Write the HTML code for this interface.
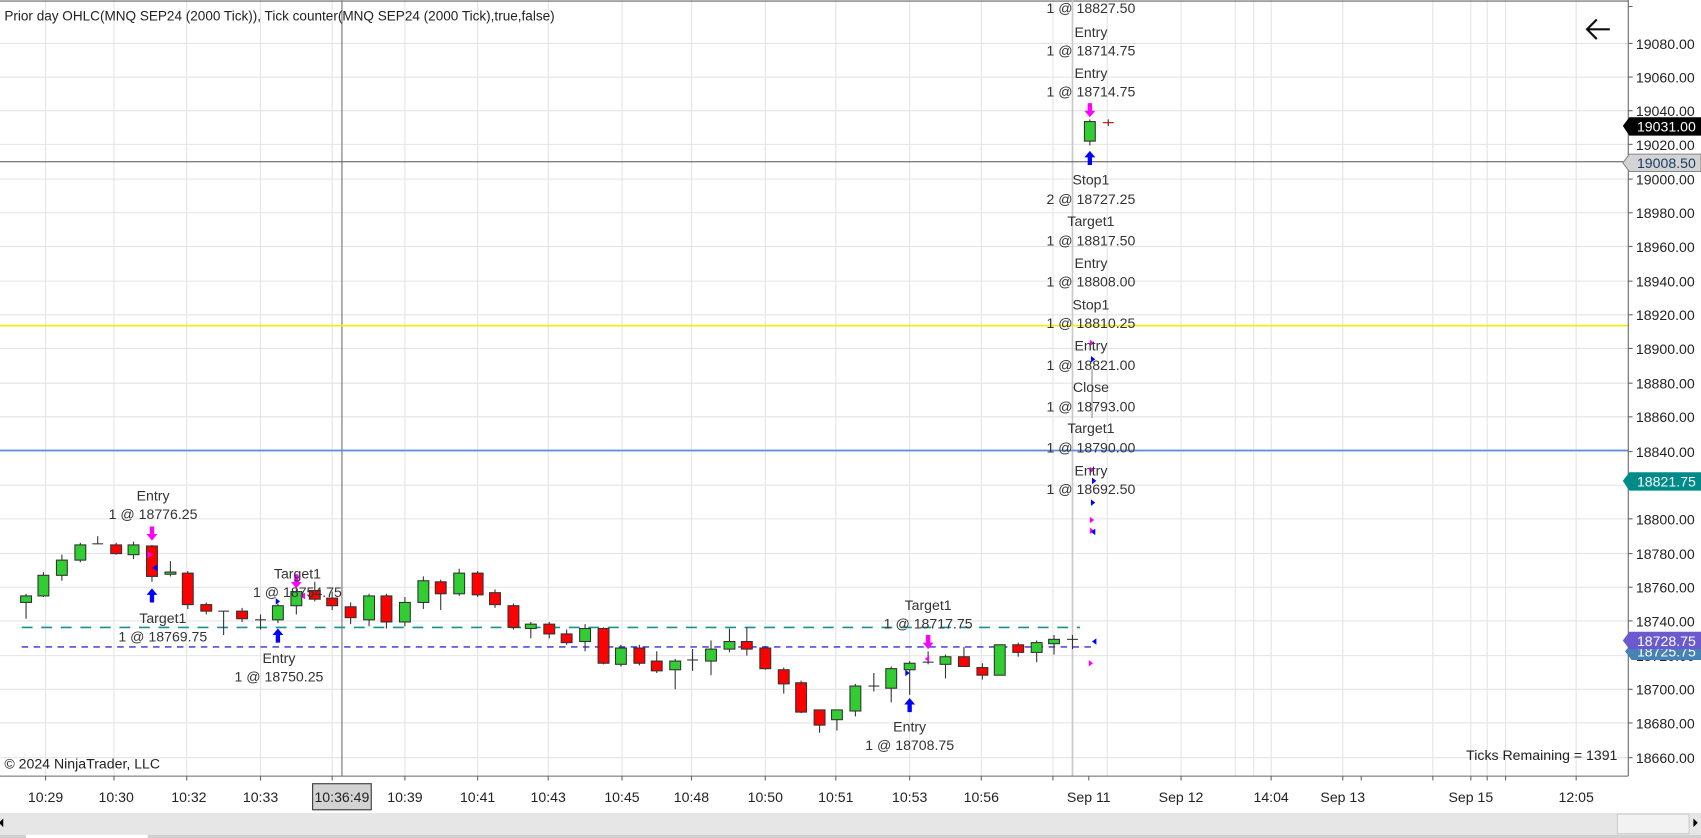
<!DOCTYPE html>
<html><head><meta charset="utf-8"><style>
html,body{margin:0;padding:0;background:#fff;overflow:hidden}
svg{display:block}
text{font-family:"Liberation Sans",sans-serif}
</style></head><body>
<svg width="1701" height="838" viewBox="0 0 1567 772" preserveAspectRatio="none" xmlns="http://www.w3.org/2000/svg">
<rect width="1567" height="772" fill="#fff"/>
<!-- horizontal grid -->
<g stroke="#e4e4e4" stroke-width="1">
<line x1="0" y1="40" x2="1500" y2="40"/><line x1="0" y1="71" x2="1500" y2="71"/><line x1="0" y1="102" x2="1500" y2="102"/><line x1="0" y1="133" x2="1500" y2="133"/><line x1="0" y1="165" x2="1500" y2="165"/><line x1="0" y1="196" x2="1500" y2="196"/><line x1="0" y1="227" x2="1500" y2="227"/><line x1="0" y1="259" x2="1500" y2="259"/><line x1="0" y1="290" x2="1500" y2="290"/><line x1="0" y1="321" x2="1500" y2="321"/><line x1="0" y1="353" x2="1500" y2="353"/><line x1="0" y1="384" x2="1500" y2="384"/><line x1="0" y1="416" x2="1500" y2="416"/><line x1="0" y1="447" x2="1500" y2="447"/><line x1="0" y1="478" x2="1500" y2="478"/><line x1="0" y1="510" x2="1500" y2="510"/><line x1="0" y1="541" x2="1500" y2="541"/><line x1="0" y1="572" x2="1500" y2="572"/><line x1="0" y1="604" x2="1500" y2="604"/><line x1="0" y1="635" x2="1500" y2="635"/><line x1="0" y1="666" x2="1500" y2="666"/><line x1="0" y1="698" x2="1500" y2="698"/>
</g>
<!-- vertical grid -->
<g stroke="#e4e4e4" stroke-width="1">
<line x1="42" y1="0" x2="42" y2="715"/><line x1="105" y1="0" x2="105" y2="715"/><line x1="172" y1="0" x2="172" y2="715"/><line x1="240" y1="0" x2="240" y2="715"/><line x1="306" y1="0" x2="306" y2="715"/><line x1="373" y1="0" x2="373" y2="715"/><line x1="440" y1="0" x2="440" y2="715"/><line x1="505" y1="0" x2="505" y2="715"/><line x1="573" y1="0" x2="573" y2="715"/><line x1="637" y1="0" x2="637" y2="715"/><line x1="705" y1="0" x2="705" y2="715"/><line x1="770" y1="0" x2="770" y2="715"/><line x1="838" y1="0" x2="838" y2="715"/><line x1="904" y1="0" x2="904" y2="715"/><line x1="970" y1="0" x2="970" y2="715"/><line x1="1020" y1="0" x2="1020" y2="715"/><line x1="1088" y1="0" x2="1088" y2="715"/><line x1="1138" y1="0" x2="1138" y2="715"/><line x1="1155" y1="0" x2="1155" y2="715"/><line x1="1171" y1="0" x2="1171" y2="715"/><line x1="1237" y1="0" x2="1237" y2="715"/><line x1="1320" y1="0" x2="1320" y2="715"/><line x1="1355" y1="0" x2="1355" y2="715"/><line x1="1370" y1="0" x2="1370" y2="715"/><line x1="1387" y1="0" x2="1387" y2="715"/><line x1="1452" y1="0" x2="1452" y2="715"/>
</g>
<line x1="0" y1="1" x2="1500" y2="1" stroke="#666"/>
<line x1="988" y1="0" x2="988" y2="715" stroke="#c8c8c8" stroke-width="1.5"/>
<line x1="315" y1="0" x2="315" y2="715" stroke="#888" stroke-width="1.2"/>
<!-- horizontal level lines -->
<line x1="0" y1="149" x2="1500" y2="149" stroke="#555"/>
<line x1="0" y1="300" x2="1500" y2="300" stroke="#f0f000" stroke-width="1.5"/>
<line x1="0" y1="415" x2="1500" y2="415" stroke="#5b8de0" stroke-width="1.5"/>
<line x1="20" y1="578" x2="995" y2="578" stroke="#1a9090" stroke-width="1.5" stroke-dasharray="10,8"/>
<line x1="20" y1="596" x2="1010" y2="596" stroke="#3030d0" stroke-width="1.2" stroke-dasharray="6,5"/>
<!-- candles -->
<g stroke="#333" stroke-width="1">
<line x1="24" y1="547" x2="24" y2="570"/><rect x="19" y="549" width="10" height="6" fill="#32cd32"/>
<line x1="40" y1="527" x2="40" y2="550"/><rect x="35" y="530" width="10" height="19" fill="#32cd32"/>
<line x1="57" y1="511" x2="57" y2="535"/><rect x="52" y="516" width="10" height="14" fill="#32cd32"/>
<line x1="74" y1="500" x2="74" y2="518"/><rect x="69" y="502" width="10" height="14" fill="#32cd32"/>
<line x1="90" y1="494" x2="90" y2="501"/><line x1="85" y1="501" x2="95" y2="501"/>
<line x1="107" y1="500" x2="107" y2="511"/><rect x="102" y="502" width="10" height="8" fill="#f00"/>
<line x1="123" y1="499" x2="123" y2="515"/><rect x="118" y="502" width="10" height="9" fill="#32cd32"/>
<line x1="140" y1="502" x2="140" y2="536"/><rect x="135" y="503" width="10" height="28" fill="#f00"/>
<line x1="157" y1="517" x2="157" y2="531"/><rect x="152" y="527" width="10" height="2" fill="#32cd32"/>
<line x1="173" y1="526" x2="173" y2="561"/><rect x="168" y="528" width="10" height="29" fill="#f00"/>
<line x1="190" y1="555" x2="190" y2="566"/><rect x="185" y="557" width="10" height="6" fill="#f00"/>
<line x1="206" y1="563" x2="206" y2="585"/><line x1="201" y1="563" x2="211" y2="563"/>
<line x1="223" y1="560" x2="223" y2="573"/><rect x="218" y="563" width="10" height="7" fill="#f00"/>
<line x1="240" y1="566" x2="240" y2="580"/><line x1="235" y1="571" x2="245" y2="571"/>
<line x1="256" y1="556" x2="256" y2="574"/><rect x="251" y="558" width="10" height="13" fill="#32cd32"/>
<line x1="273" y1="543" x2="273" y2="566"/><rect x="268" y="545" width="10" height="13" fill="#32cd32"/>
<line x1="290" y1="536" x2="290" y2="554"/><rect x="285" y="544" width="10" height="8" fill="#f00"/>
<line x1="306" y1="545" x2="306" y2="562"/><rect x="301" y="551" width="10" height="7" fill="#f00"/>
<line x1="323" y1="555" x2="323" y2="575"/><rect x="318" y="559" width="10" height="10" fill="#f00"/>
<line x1="340" y1="547" x2="340" y2="577"/><rect x="335" y="549" width="10" height="22" fill="#32cd32"/>
<line x1="356" y1="547" x2="356" y2="579"/><rect x="351" y="549" width="10" height="24" fill="#f00"/>
<line x1="373" y1="550" x2="373" y2="577"/><rect x="368" y="555" width="10" height="18" fill="#32cd32"/>
<line x1="390" y1="531" x2="390" y2="561"/><rect x="385" y="535" width="10" height="20" fill="#32cd32"/>
<line x1="406" y1="534" x2="406" y2="562"/><rect x="401" y="536" width="10" height="11" fill="#f00"/>
<line x1="423" y1="524" x2="423" y2="549"/><rect x="418" y="528" width="10" height="19" fill="#32cd32"/>
<line x1="440" y1="526" x2="440" y2="550"/><rect x="435" y="528" width="10" height="20" fill="#f00"/>
<line x1="456" y1="543" x2="456" y2="560"/><rect x="451" y="546" width="10" height="11" fill="#f00"/>
<line x1="473" y1="556" x2="473" y2="580"/><rect x="468" y="558" width="10" height="20" fill="#f00"/>
<line x1="489" y1="573" x2="489" y2="588"/><rect x="484" y="575" width="10" height="4" fill="#32cd32"/>
<line x1="506" y1="573" x2="506" y2="588"/><rect x="501" y="575" width="10" height="9" fill="#f00"/>
<line x1="522" y1="580" x2="522" y2="594"/><rect x="517" y="584" width="10" height="8" fill="#f00"/>
<line x1="539" y1="575" x2="539" y2="600"/><rect x="534" y="579" width="10" height="12" fill="#32cd32"/>
<line x1="556" y1="578" x2="556" y2="612"/><rect x="551" y="579" width="10" height="32" fill="#f00"/>
<line x1="572" y1="594" x2="572" y2="614"/><rect x="567" y="597" width="10" height="15" fill="#32cd32"/>
<line x1="589" y1="594" x2="589" y2="613"/><rect x="584" y="597" width="10" height="14" fill="#f00"/>
<line x1="605" y1="600" x2="605" y2="620"/><rect x="600" y="609" width="10" height="9" fill="#f00"/>
<line x1="622" y1="607" x2="622" y2="635"/><rect x="617" y="609" width="10" height="8" fill="#32cd32"/>
<line x1="638" y1="598" x2="638" y2="618"/><line x1="633" y1="608" x2="643" y2="608"/>
<line x1="655" y1="590" x2="655" y2="622"/><rect x="650" y="598" width="10" height="11" fill="#32cd32"/>
<line x1="672" y1="579" x2="672" y2="601"/><rect x="667" y="591" width="10" height="7" fill="#32cd32"/>
<line x1="688" y1="578" x2="688" y2="604"/><rect x="683" y="591" width="10" height="7" fill="#f00"/>
<line x1="705" y1="595" x2="705" y2="617"/><rect x="700" y="597" width="10" height="19" fill="#f00"/>
<line x1="722" y1="615" x2="722" y2="639"/><rect x="717" y="617" width="10" height="13" fill="#f00"/>
<line x1="738" y1="627" x2="738" y2="657"/><rect x="733" y="629" width="10" height="27" fill="#f00"/>
<line x1="755" y1="654" x2="755" y2="675"/><rect x="750" y="654" width="10" height="14" fill="#f00"/>
<line x1="771" y1="654" x2="771" y2="673"/><rect x="766" y="654" width="10" height="9" fill="#32cd32"/>
<line x1="788" y1="630" x2="788" y2="660"/><rect x="783" y="632" width="10" height="23" fill="#32cd32"/>
<line x1="805" y1="620" x2="805" y2="637"/><line x1="800" y1="632" x2="810" y2="632"/>
<line x1="821" y1="614" x2="821" y2="647"/><rect x="816" y="616" width="10" height="18" fill="#32cd32"/>
<line x1="838" y1="609" x2="838" y2="640"/><rect x="833" y="611" width="10" height="6" fill="#32cd32"/>
<line x1="855" y1="600" x2="855" y2="612"/><line x1="850" y1="610" x2="860" y2="610"/>
<line x1="871" y1="603" x2="871" y2="625"/><rect x="866" y="605" width="10" height="7" fill="#32cd32"/>
<line x1="888" y1="596" x2="888" y2="614"/><rect x="883" y="605" width="10" height="9" fill="#f00"/>
<line x1="905" y1="611" x2="905" y2="626"/><rect x="900" y="615" width="10" height="7" fill="#f00"/>
<line x1="921" y1="594" x2="921" y2="622"/><rect x="916" y="594" width="10" height="28" fill="#32cd32"/>
<line x1="938" y1="592" x2="938" y2="605"/><rect x="933" y="594" width="10" height="7" fill="#f00"/>
<line x1="955" y1="590" x2="955" y2="610"/><rect x="950" y="592" width="10" height="9" fill="#32cd32"/>
<line x1="971" y1="585" x2="971" y2="603"/><rect x="966" y="589" width="10" height="4" fill="#32cd32"/>
<line x1="988" y1="585" x2="988" y2="598"/><line x1="983" y1="589" x2="993" y2="589"/>
<line x1="1004" y1="110" x2="1004" y2="134"/><rect x="999" y="112" width="10" height="18" fill="#32cd32"/>
<line x1="1021" y1="110" x2="1021" y2="116"/><line x1="1016" y1="113" x2="1026" y2="113" stroke="#c00"/>
</g>
<line x1="1006" y1="340" x2="1006" y2="385" stroke="#888"/>
<!-- arrows -->
<g fill="#ff00ff">
<path d="M138,485h4v7h3l-5,6l-5,-6h3z"/><path d="M271,529h4v7h3l-5,6l-5,-6h3z"/><path d="M1002,95h4v7h3l-5,6l-5,-6h3z"/><path d="M853,585h4v7h3l-5,6l-5,-6h3z"/>
<path d="M136,508l5,3l-5,3z"/><path d="M281,546l-5,3l5,3z"/><path d="M856,604l-4,3l4,3z"/><path d="M1003,608l4,3l-4,3z"/><path d="M1004,430l4,3l-4,3z"/><path d="M1004,476l4,3l-4,3z"/><path d="M1004,486l4,3l-4,3z"/><path d="M1004,313l4,3l-4,3z"/>
</g>
<g fill="#0000ff">
<path d="M138,555h4v-7h3l-5,-6l-5,6h3z"/><path d="M254,592h4v-7h3l-5,-6l-5,6h3z"/><path d="M1002,152h4v-7h3l-5,-6l-5,6h3z"/><path d="M836,656h4v-7h3l-5,-6l-5,6h3z"/>
<path d="M145,520l-5,3l5,3z"/><path d="M254,551l4,3l-4,3z"/><path d="M834,617l4,3l-4,3z"/><path d="M1010,588l-4,3l4,3z"/><path d="M1005,328l4,3l-4,3z"/><path d="M1006,440l4,3l-4,3z"/><path d="M1005,460l4,3l-4,3z"/><path d="M1009,487l-4,3l4,3z"/>
</g>
<!-- labels -->
<g font-size="13" fill="#333" text-anchor="middle">
<text x="1005" y="12">1 @ 18827.50</text>
<text x="1005" y="34">Entry</text><text x="1005" y="51">1 @ 18714.75</text>
<text x="1005" y="72">Entry</text><text x="1005" y="89">1 @ 18714.75</text>
<text x="1005" y="170">Stop1</text><text x="1005" y="188">2 @ 18727.25</text>
<text x="1005" y="208">Target1</text><text x="1005" y="226">1 @ 18817.50</text>
<text x="1005" y="247">Entry</text><text x="1005" y="264">1 @ 18808.00</text>
<text x="1005" y="285">Stop1</text><text x="1005" y="302">1 @ 18810.25</text>
<text x="1005" y="323">Entry</text><text x="1005" y="341">1 @ 18821.00</text>
<text x="1005" y="361">Close</text><text x="1005" y="379">1 @ 18793.00</text>
<text x="1005" y="399">Target1</text><text x="1005" y="417">1 @ 18790.00</text>
<text x="1005" y="438">Entry</text><text x="1005" y="455">1 @ 18692.50</text>
<text x="141" y="461">Entry</text><text x="141" y="478">1 @ 18776.25</text>
<text x="274" y="533">Target1</text><text x="274" y="550">1 @ 18754.75</text>
<text x="150" y="574">Target1</text><text x="150" y="591">1 @ 18769.75</text>
<text x="257" y="611">Entry</text><text x="257" y="628">1 @ 18750.25</text>
<text x="855" y="562">Target1</text><text x="855" y="579">1 @ 18717.75</text>
<text x="838" y="674">Entry</text><text x="838" y="691">1 @ 18708.75</text>
</g>
<text x="4" y="19" font-size="12.5" fill="#222">Prior day OHLC(MNQ SEP24 (2000 Tick)), Tick counter(MNQ SEP24 (2000 Tick),true,false)</text>
<text x="4" y="708" font-size="13" fill="#222">© 2024 NinjaTrader, LLC</text>
<text x="1490" y="700" font-size="13" fill="#222" text-anchor="end">Ticks Remaining = 1391</text>
<!-- back arrow -->
<path d="M1483,27H1462M1471,18l-9,9l9,9" stroke="#111" stroke-width="2" fill="none"/>
<!-- right axis -->
<line x1="1500" y1="0" x2="1500" y2="715" stroke="#666"/>
<line x1="0" y1="715" x2="1500" y2="715" stroke="#666"/>
<g stroke="#666"><line x1="1500" y1="6" x2="1504" y2="6"/><line x1="1500" y1="40" x2="1504" y2="40"/><line x1="1500" y1="71" x2="1504" y2="71"/><line x1="1500" y1="102" x2="1504" y2="102"/><line x1="1500" y1="133" x2="1504" y2="133"/><line x1="1500" y1="165" x2="1504" y2="165"/><line x1="1500" y1="196" x2="1504" y2="196"/><line x1="1500" y1="227" x2="1504" y2="227"/><line x1="1500" y1="259" x2="1504" y2="259"/><line x1="1500" y1="290" x2="1504" y2="290"/><line x1="1500" y1="321" x2="1504" y2="321"/><line x1="1500" y1="353" x2="1504" y2="353"/><line x1="1500" y1="384" x2="1504" y2="384"/><line x1="1500" y1="416" x2="1504" y2="416"/><line x1="1500" y1="447" x2="1504" y2="447"/><line x1="1500" y1="478" x2="1504" y2="478"/><line x1="1500" y1="510" x2="1504" y2="510"/><line x1="1500" y1="541" x2="1504" y2="541"/><line x1="1500" y1="572" x2="1504" y2="572"/><line x1="1500" y1="604" x2="1504" y2="604"/><line x1="1500" y1="635" x2="1504" y2="635"/><line x1="1500" y1="666" x2="1504" y2="666"/><line x1="1500" y1="698" x2="1504" y2="698"/></g>
<g font-size="13" fill="#222">
<text x="1507" y="45">19080.00</text><text x="1507" y="76">19060.00</text><text x="1507" y="107">19040.00</text><text x="1507" y="138">19020.00</text><text x="1507" y="170">19000.00</text><text x="1507" y="201">18980.00</text><text x="1507" y="232">18960.00</text><text x="1507" y="264">18940.00</text><text x="1507" y="295">18920.00</text><text x="1507" y="326">18900.00</text><text x="1507" y="358">18880.00</text><text x="1507" y="389">18860.00</text><text x="1507" y="421">18840.00</text><text x="1507" y="452">18820.00</text><text x="1507" y="483">18800.00</text><text x="1507" y="515">18780.00</text><text x="1507" y="546">18760.00</text><text x="1507" y="577">18740.00</text><text x="1507" y="609">18720.00</text><text x="1507" y="640">18700.00</text><text x="1507" y="671">18680.00</text><text x="1507" y="703">18660.00</text>
</g>
<!-- price markers -->
<path d="M1495,116l6,-8h66v17h-66z" fill="#000"/><text x="1508" y="121" font-size="13" fill="#fff">19031.00</text>
<path d="M1495,150l6,-8h66v16h-66z" fill="#d3d3d3" stroke="#888"/><text x="1508" y="155" font-size="13" fill="#1a3a6a">19008.50</text>
<path d="M1495,443l6,-8h66v17h-66z" fill="#008b8b"/><text x="1508" y="448" font-size="13" fill="#fff">18821.75</text>
<path d="M1497,600l6,-7h64v15h-64z" fill="#4682b4"/><text x="1508" y="605" font-size="13" fill="#fff">18725.75</text>
<path d="M1495,590l6,-8h66v16h-66z" fill="#6a5acd"/><text x="1508" y="595" font-size="13" fill="#fff">18728.75</text>
<!-- time axis -->
<g stroke="#666"><line x1="42" y1="715" x2="42" y2="719"/><line x1="105" y1="715" x2="105" y2="719"/><line x1="172" y1="715" x2="172" y2="719"/><line x1="240" y1="715" x2="240" y2="719"/><line x1="306" y1="715" x2="306" y2="719"/><line x1="373" y1="715" x2="373" y2="719"/><line x1="440" y1="715" x2="440" y2="719"/><line x1="505" y1="715" x2="505" y2="719"/><line x1="573" y1="715" x2="573" y2="719"/><line x1="637" y1="715" x2="637" y2="719"/><line x1="705" y1="715" x2="705" y2="719"/><line x1="770" y1="715" x2="770" y2="719"/><line x1="838" y1="715" x2="838" y2="719"/><line x1="904" y1="715" x2="904" y2="719"/><line x1="970" y1="715" x2="970" y2="719"/><line x1="1003" y1="715" x2="1003" y2="719"/><line x1="1088" y1="715" x2="1088" y2="719"/><line x1="1171" y1="715" x2="1171" y2="719"/><line x1="1237" y1="715" x2="1237" y2="719"/><line x1="1254" y1="715" x2="1254" y2="719"/><line x1="1320" y1="715" x2="1320" y2="719"/><line x1="1355" y1="715" x2="1355" y2="719"/><line x1="1370" y1="715" x2="1370" y2="719"/><line x1="1387" y1="715" x2="1387" y2="719"/><line x1="1452" y1="715" x2="1452" y2="719"/></g>
<rect x="288" y="722" width="54" height="24" fill="#d3d3d3" stroke="#333"/>
<g font-size="13" fill="#222" text-anchor="middle">
<text x="42" y="739">10:29</text><text x="107" y="739">10:30</text><text x="174" y="739">10:32</text><text x="240" y="739">10:33</text><text x="315" y="739">10:36:49</text><text x="373" y="739">10:39</text><text x="440" y="739">10:41</text><text x="505" y="739">10:43</text><text x="573" y="739">10:45</text><text x="637" y="739">10:48</text><text x="705" y="739">10:50</text><text x="770" y="739">10:51</text><text x="838" y="739">10:53</text><text x="904" y="739">10:56</text><text x="1003" y="739">Sep 11</text><text x="1088" y="739">Sep 12</text><text x="1171" y="739">14:04</text><text x="1237" y="739">Sep 13</text><text x="1355" y="739">Sep 15</text><text x="1452" y="739">12:05</text>
</g>
<!-- scrollbar -->
<rect x="0" y="749" width="1567" height="20" fill="#e6e6e6"/>
<path d="M3,754v8l-4,-4z" fill="#000"/>
<path d="M1560,754v8l4,-4z" fill="#000"/>
<rect x="1490" y="750" width="66" height="18" fill="#f2f2f2" stroke="#ccc"/>
<rect x="0" y="769" width="1567" height="3" fill="#d0d0d0"/>
<rect x="24" y="769" width="112" height="3" fill="#fff"/>
</svg>
</body></html>
